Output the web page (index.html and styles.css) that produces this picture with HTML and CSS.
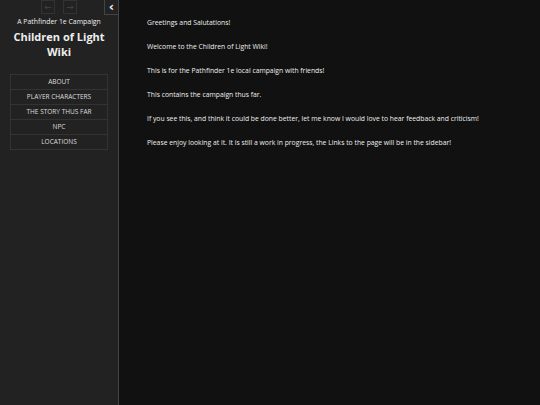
FILE: index.html
```html
<!DOCTYPE html>
<html lang="en">
<head>
    <meta charset="UTF-8">
    <meta name="viewport" content="width=device-width, initial-scale=1.0">
    <title>Children of Light Wiki</title>
    <link rel="stylesheet" href="styles.css">
</head>
<body>
    <div class="ui-bar">
        <div class="ui-bar-tray">
            <button class="history-btn" disabled>&#x2190;</button>
            <button class="history-btn" disabled>&#x2192;</button>
            <button class="stow-btn">&#x2039;</button>
        </div>
        <div class="story-banner">
            <div class="story-subtitle">A Pathfinder 1e Campaign</div>
            <div class="story-title">Children of Light Wiki</div>
        </div>
        <ul class="story-menu">
            <li><a href="#">About</a></li>
            <li><a href="#">Player Characters</a></li>
            <li><a href="#">The Story thus far</a></li>
            <li><a href="#">NPC</a></li>
            <li><a href="#">Locations</a></li>
        </ul>
    </div>
    <div class="passage">
        <p>Greetings and Salutations!</p>
        <p>Welcome to the Children of Light Wiki!</p>
        <p>This is for the Pathfinder 1e local campaign with friends!</p>
        <p>This contains the campaign thus far.</p>
        <p>If you see this, and think it could be done better, let me know I would love to hear feedback and criticism!</p>
        <p>Please enjoy looking at it. It is still a work in progress, the Links to the page will be in the sidebar!</p>
    </div>
</body>
</html>
```

FILE: styles.css
```css
body {
    font-family: 'Open Sans', sans-serif;
    background-color: #111;
    color: #eee;
    margin: 0;
    display: flex;
    min-height: 100vh;
}
.ui-bar {
    width: 118px;
    flex-shrink: 0;
    background-color: #222;
    border-right: 1px solid #444;
    min-height: 100vh;
}
.ui-bar-tray {
    display: flex;
    height: 15px;
    padding-left: 41px;
}
.history-btn {
    width: 14px;
    height: 14px;
    padding: 0;
    margin-right: 8px;
    background: transparent;
    border: 1px solid #333;
    color: #444;
    font-size: 9px;
    line-height: 12px;
    font-family: 'DejaVu Sans', sans-serif;
}
.stow-btn {
    margin-left: auto;
    width: 14px;
    height: 15px;
    padding: 0;
    background: transparent;
    border: none;
    border-left: 1px solid #444;
    border-bottom: 1px solid #444;
    color: #eee;
    font-size: 13px;
    font-weight: bold;
    line-height: 12px;
    font-family: 'DejaVu Sans', sans-serif;
}
.story-banner {
    text-align: center;
    padding: 1px 6px 0;
}
.story-subtitle {
    font-size: 6.9px;
    line-height: 12px;
}
.story-title {
    font-size: 11px;
    font-weight: bold;
    line-height: 15px;
    margin-top: 1px;
}
.story-menu {
    list-style: none;
    margin: 15px 10px 0;
    padding: 0;
    border: 1px solid #333;
}
.story-menu li + li {
    border-top: 1px solid #333;
}
.story-menu a {
    display: block;
    text-align: center;
    text-transform: uppercase;
    color: #ddd;
    text-decoration: none;
    font-size: 6.5px;
    line-height: 14px;
}
.passage {
    padding: 18px 0 0 28px;
    font-size: 6.8px;
}
.passage p {
    margin: 0 0 15px;
    line-height: 9px;
}
```
